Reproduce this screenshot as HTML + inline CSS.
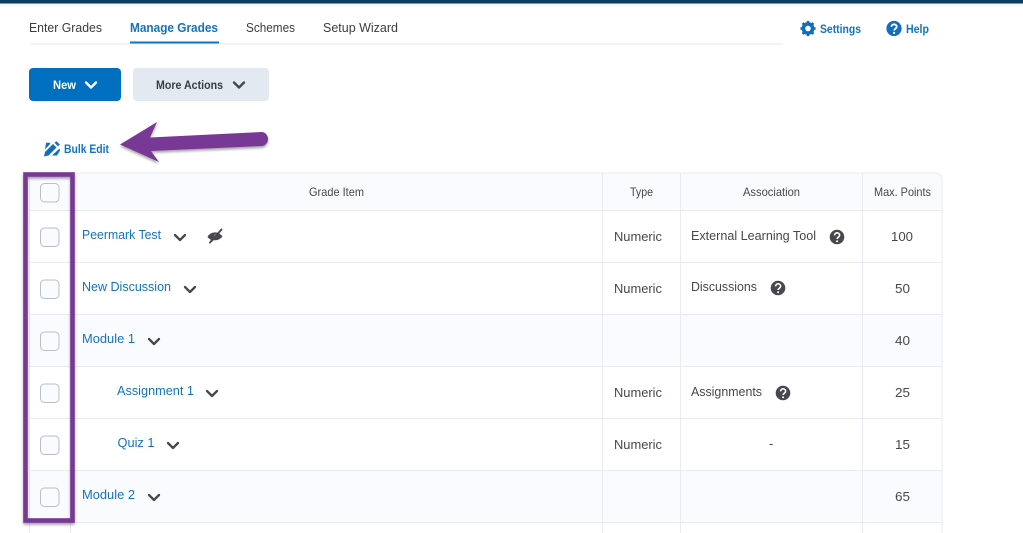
<!DOCTYPE html>
<html><head><meta charset="utf-8"><style>
html,body{margin:0;padding:0;background:#fff;width:1023px;height:533px;overflow:hidden}
svg{display:block}
text{font-family:"Liberation Sans",sans-serif;font-size:13px;fill:#45484a}
.l{fill:#1473bd}
.b{font-weight:bold;font-size:12px}
.t{fill:#3a3d40}
</style></head><body>
<svg width="1023" height="533" viewBox="0 0 1023 533" xmlns="http://www.w3.org/2000/svg">
<defs>
<filter id="s" x="-10%" y="-10%" width="120%" height="120%"><feDropShadow dx="0" dy="2" stdDeviation="1.2" flood-color="#000" flood-opacity=".35"/></filter>
<g id="cv"><path d="M-5 -2.5L0 2.5L5 -2.5" fill="none" stroke="#46484b" stroke-width="2.3" stroke-linecap="round" stroke-linejoin="round"/></g>
<g id="q"><circle r="7.3" fill="#46484b"/><path d="M-2.4 -1.6C-2.4 -5 2.6 -5 2.6 -1.7C2.6 .2 .1 .2 .1 2" fill="none" stroke="#fff" stroke-width="1.6"/><circle cx=".1" cy="4.2" r="1" fill="#fff"/></g>
</defs>
<rect width="1023" height="3.5" fill="#0b3c61"/>
<rect y="3.5" width="1023" height="3" fill="#f7f7f8"/>

<rect x="29" y="43" width="754" height="1.5" fill="#eff0f2"/>
<text class="t" x="29" y="32" textLength="73" lengthAdjust="spacingAndGlyphs">Enter Grades</text>
<text x="130" y="32" textLength="88" lengthAdjust="spacingAndGlyphs" style="font-weight:bold;fill:#1473bd">Manage Grades</text>
<rect x="130" y="41.5" width="89" height="2" fill="#1473bd"/>
<text class="t" x="246" y="32" textLength="49" lengthAdjust="spacingAndGlyphs">Schemes</text>
<text class="t" x="323" y="32" textLength="75" lengthAdjust="spacingAndGlyphs">Setup Wizard</text>

<g transform="translate(808,28.5)"><circle r="4.6" fill="none" stroke="#0f6fbd" stroke-width="3.6"/><path d="M0 -7.6V-4.5M0 4.5V7.6M-7.6 0H-4.5M4.5 0H7.6M-5.4 -5.4L-3.2 -3.2M3.2 3.2L5.4 5.4M-5.4 5.4L-3.2 3.2M3.2 -3.2L5.4 -5.4" stroke="#0f6fbd" stroke-width="2.6"/></g>
<text class="b l" x="820" y="33" textLength="41" lengthAdjust="spacingAndGlyphs">Settings</text>
<g transform="translate(894,28.5)"><circle r="7.6" fill="#0f6fbd"/><path d="M-2.5 -1.8C-2.5 -5 2.7 -5 2.7 -1.7C2.7 .2 .1 .2 .1 2" fill="none" stroke="#fff" stroke-width="1.8"/><circle cx=".1" cy="4.4" r="1.1" fill="#fff"/></g>
<text class="b l" x="906" y="33" textLength="23" lengthAdjust="spacingAndGlyphs">Help</text>

<rect x="29" y="68" width="92" height="33" rx="4" fill="#006fbf"/>
<text class="b" x="53" y="89" textLength="23" lengthAdjust="spacingAndGlyphs" style="fill:#fff">New</text>
<path d="M86 82.5L91 87.5L96 82.5" fill="none" stroke="#fff" stroke-width="2.4" stroke-linecap="round" stroke-linejoin="round"/>
<rect x="133" y="68" width="136" height="33" rx="4" fill="#e3e9f1"/>
<text class="b" x="156" y="89" textLength="67" lengthAdjust="spacingAndGlyphs" style="fill:#3a3d40">More Actions</text>
<path d="M234 82.5L239 87.5L244 82.5" fill="none" stroke="#46484b" stroke-width="2.4" stroke-linecap="round" stroke-linejoin="round"/>

<g transform="translate(52,149)" fill="#0f6fbd"><path d="M-8 7.5L-7 3L1 -5L4.5 -1.5L-3.5 6.5Z"/><path d="M2.5 -6.2L4.5 -7.8L7.8 -4.5L6 -2.8Z"/><path d="M-7 .5L-1.5 -5.5L-3.5 -6.5L-6 -6Z"/><path d="M0 6.5L7.5 -.5L8 1.5L5 6.5Z"/></g>
<text class="b l" x="64" y="153" textLength="45" lengthAdjust="spacingAndGlyphs">Bulk Edit</text>

<!-- table -->
<path d="M29 533V179a6 6 0 0 1 6-6H936a6 6 0 0 1 6 6V533Z" fill="#fff"/>
<path d="M29 210V179a6 6 0 0 1 6-6H936a6 6 0 0 1 6 6V210Z" fill="#fafbfe"/>
<rect x="29" y="314" width="913" height="52" fill="#fafbfe"/>
<rect x="29" y="470" width="913" height="52" fill="#fafbfe"/>
<g stroke="#e8ebf0" stroke-width="1" fill="none">
<path d="M29.5 533V179a6 6 0 0 1 6-6H936a6 6 0 0 1 6 6V533"/>
<path d="M29 210.5H942M29 262.5H942M29 314.5H942M29 366.5H942M29 418.5H942M29 470.5H942M29 522.5H942"/>
<path d="M70.5 173V533M602.5 173V533M680.5 173V533M862.5 173V533"/>
</g>

<g fill="#f9fbff" stroke="#b9bfc6" stroke-width="1">
<rect x="40.5" y="183.5" width="18.5" height="18.5" rx="4"/>
<rect x="40.5" y="228" width="18.5" height="18.5" rx="4"/>
<rect x="40.5" y="280" width="18.5" height="18.5" rx="4"/>
<rect x="40.5" y="332" width="18.5" height="18.5" rx="4"/>
<rect x="40.5" y="384" width="18.5" height="18.5" rx="4"/>
<rect x="40.5" y="436" width="18.5" height="18.5" rx="4"/>
<rect x="40.5" y="488" width="18.5" height="18.5" rx="4"/>
</g>

<text x="309" y="196" textLength="55" lengthAdjust="spacingAndGlyphs" style="font-size:12px">Grade Item</text>
<text x="630" y="196" textLength="23" lengthAdjust="spacingAndGlyphs" style="font-size:12px">Type</text>
<text x="743" y="196" textLength="57" lengthAdjust="spacingAndGlyphs" style="font-size:12px">Association</text>
<text x="874" y="196" textLength="57" lengthAdjust="spacingAndGlyphs" style="font-size:12px">Max. Points</text>

<text class="l" x="82" y="239" textLength="79" lengthAdjust="spacingAndGlyphs">Peermark Test</text>
<use href="#cv" x="180" y="237.5"/>
<g transform="translate(215,236)"><path d="M-7.5 .5C-3.5 -5 3.5 -5 7.5 .5C3.5 5.5 -3.5 5.5 -7.5 .5Z" fill="#46484b"/><circle cx=".5" cy="-.5" r="1.4" fill="#8b8d90"/><path d="M-5 6.5L6.5 -6.5" stroke="#46484b" stroke-width="1.9" stroke-linecap="round"/><path d="M-7 1L-2 5" stroke="#46484b" stroke-width="1"/></g>
<text x="614" y="241" textLength="48" lengthAdjust="spacingAndGlyphs">Numeric</text>
<text x="691" y="240" textLength="125" lengthAdjust="spacingAndGlyphs">External Learning Tool</text>
<use href="#q" x="837" y="237"/>
<text x="891" y="241" textLength="22" lengthAdjust="spacingAndGlyphs">100</text>

<text class="l" x="82" y="291" textLength="89" lengthAdjust="spacingAndGlyphs">New Discussion</text>
<use href="#cv" x="190" y="289.5"/>
<text x="614" y="293" textLength="48" lengthAdjust="spacingAndGlyphs">Numeric</text>
<text x="691" y="291" textLength="66" lengthAdjust="spacingAndGlyphs">Discussions</text>
<use href="#q" x="778" y="288"/>
<text x="895" y="293" textLength="15" lengthAdjust="spacingAndGlyphs">50</text>

<text class="l" x="82" y="343" textLength="53" lengthAdjust="spacingAndGlyphs">Module 1</text>
<use href="#cv" x="154" y="341.5"/>
<text x="895" y="345" textLength="15" lengthAdjust="spacingAndGlyphs">40</text>

<text class="l" x="117" y="395" textLength="77" lengthAdjust="spacingAndGlyphs">Assignment 1</text>
<use href="#cv" x="212" y="393.5"/>
<text x="614" y="397" textLength="48" lengthAdjust="spacingAndGlyphs">Numeric</text>
<text x="691" y="396" textLength="71" lengthAdjust="spacingAndGlyphs">Assignments</text>
<use href="#q" x="783" y="393"/>
<text x="895" y="397" textLength="15" lengthAdjust="spacingAndGlyphs">25</text>

<text class="l" x="117.5" y="447" textLength="37" lengthAdjust="spacingAndGlyphs">Quiz 1</text>
<use href="#cv" x="173" y="445.5"/>
<text x="614" y="449" textLength="48" lengthAdjust="spacingAndGlyphs">Numeric</text>
<text x="769" y="448">-</text>
<text x="895" y="449" textLength="15" lengthAdjust="spacingAndGlyphs">15</text>

<text class="l" x="82" y="499" textLength="53" lengthAdjust="spacingAndGlyphs">Module 2</text>
<use href="#cv" x="154" y="497.5"/>
<text x="895" y="501" textLength="15" lengthAdjust="spacingAndGlyphs">65</text>

<!-- annotations -->
<rect x="25.5" y="174.5" width="47" height="346" fill="none" stroke="#783796" stroke-width="4.6" filter="url(#s)"/>
<path d="M120 144.5L157 122L150 137.5L262 132a6.8 6.8 0 0 1 6 7a6.8 6.8 0 0 1 -6 7L151 151L159 162Z" fill="#783796" filter="url(#s)"/>
</svg>
</body></html>
